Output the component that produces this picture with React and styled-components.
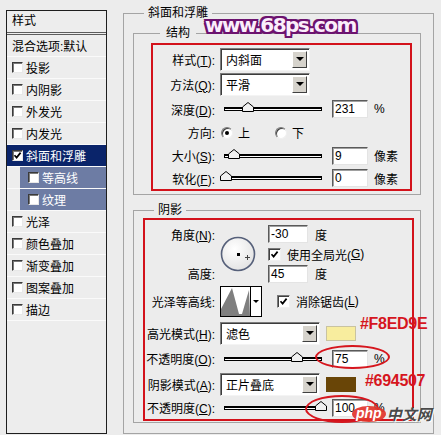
import React from "react";
import styled, { createGlobalStyle } from "styled-components";

const GlobalStyle = createGlobalStyle`
  html, body {
    margin: 0;
    padding: 0;
    background: #ececec;
  }
  body {
    font-family: "Liberation Sans", "Noto Sans CJK SC", sans-serif;
    font-size: 12px;
    color: #000;
  }
`;

const Screen = styled.div`
  position: relative;
  width: 441px;
  height: 435px;
  box-sizing: border-box;
  padding-left: 6px;
  display: flex;
  align-items: flex-start;
  overflow: hidden;
  background: #ececec;
`;

/* ---------- left list ---------- */

const StylePanel = styled.div`
  margin-top: 10px;
  width: 101px;
  height: 424px;
  box-sizing: border-box;
  border: 1px solid #1e1e1e;
  background: #ededed;
  display: flex;
  flex-direction: column;
`;

const PanelHead = styled.div`
  height: 24px;
  line-height: 21px;
  padding-left: 5px;
  box-sizing: border-box;
  border-bottom: 3px double #5c5c5c;
`;

const Item = styled.div`
  height: 22px;
  box-sizing: border-box;
  display: flex;
  align-items: center;
  gap: 3px;
  padding-left: ${(p) => (p.$sub ? 21 : 5)}px;
  border-bottom: 1px solid #fafafa;
  color: ${(p) => (p.$active || p.$sub ? "#fff" : "#000")};
  background: ${(p) =>
    p.$active
      ? "#0a246a"
      : p.$sub
      ? "linear-gradient(to right, #ededed 13px, #6d7ca4 13px)"
      : "#ededed"};
`;

const SmallBox = styled.span`
  width: 11px;
  height: 11px;
  box-sizing: border-box;
  flex: none;
  background: #fff;
  border: 1px solid;
  border-color: #3a3a3a #e8e8e8 #e8e8e8 #3a3a3a;
  box-shadow: inset 1px 1px 0 #7a7a7a;
  display: inline-flex;
  align-items: center;
  justify-content: center;
`;

const CheckMark = ({ size = 9 }) => (
  <svg width={size} height={size} viewBox="0 0 9 9">
    <path d="M1.5 4.3 L3.6 6.6 L7.6 1.6" stroke="#000" strokeWidth="1.7" fill="none" />
  </svg>
);

const effects = [
  { name: "投影" },
  { name: "内阴影" },
  { name: "外发光" },
  { name: "内发光" },
  { name: "斜面和浮雕", active: true, checked: true },
  { name: "等高线", sub: true },
  { name: "纹理", sub: true },
  { name: "光泽" },
  { name: "颜色叠加" },
  { name: "渐变叠加" },
  { name: "图案叠加" },
  { name: "描边" },
];

/* ---------- groups ---------- */

const Group = styled.fieldset`
  margin: ${(p) => p.$mt || 0}px 0 0 ${(p) => p.$ml || 0}px;
  padding: ${(p) => p.$pad};
  width: ${(p) => p.$w}px;
  box-sizing: border-box;
  min-width: 0;
  border: 1px solid #a4a4a4;
`;

const Legend = styled.legend`
  margin-left: ${(p) => p.$ml}px;
  padding: 0 ${(p) => p.$px}px;
  line-height: 14px;
  font-size: 12px;
`;

const RedBox = styled.div`
  height: ${(p) => p.$h}px;
  box-sizing: border-box;
  border: 2px solid #d3121b;
  padding-top: ${(p) => p.$pt}px;
`;

const Row = styled.div`
  display: grid;
  grid-template-columns: ${(p) => p.$label}px auto;
  column-gap: 5px;
  align-items: center;
  height: ${(p) => p.$h}px;
`;

const Label = styled.span`
  text-align: right;
  white-space: nowrap;
`;

const Controls = styled.div`
  display: flex;
  align-items: center;
`;

const Select = styled.div`
  width: ${(p) => p.$w}px;
  height: 23px;
  box-sizing: border-box;
  background: #fff;
  border: 1px solid;
  border-color: #7c7c7c #f4f4f4 #f4f4f4 #7c7c7c;
  box-shadow: inset 1px 1px 0 #3c3c3c;
  display: flex;
  align-items: center;
  justify-content: space-between;
  padding: 2px 2px 2px 5px;
`;

const SelectArrow = styled.span`
  width: 15px;
  height: 17px;
  box-sizing: border-box;
  background: #d6d3cc;
  border: 1px solid;
  border-color: #fff #404040 #404040 #fff;
  display: flex;
  align-items: center;
  justify-content: center;
  &::after {
    content: "";
    border-left: 4px solid transparent;
    border-right: 4px solid transparent;
    border-top: 4px solid #000;
  }
`;

const SliderTrack = styled.div`
  position: relative;
  width: 98px;
  height: 4px;
  box-sizing: border-box;
  margin: 0 10px 0 4px;
  border: 1px solid #000;
  border-top-width: 2px;
  background: #fff;
`;

const ThumbSvg = styled.svg`
  position: absolute;
  bottom: -2px;
  left: ${(p) => p.$pos * 100}%;
  transform: translateX(-50%);
`;

const Slider = ({ pos }) => (
  <SliderTrack>
    <ThumbSvg $pos={pos} width="12" height="10" viewBox="0 0 12 10">
      <polygon points="0.5,9.5 0.5,5 6,0.5 11.5,5 11.5,9.5" fill="#f0f0f0" stroke="#000" />
    </ThumbSvg>
  </SliderTrack>
);

const NumBox = styled.div`
  width: ${(p) => p.$w || 36}px;
  height: 18px;
  box-sizing: border-box;
  background: #fff;
  border: 1px solid;
  border-color: #5a5a5a #e4e4e4 #e4e4e4 #5a5a5a;
  box-shadow: inset 1px 1px 0 #a0a0a0;
  padding-left: 2px;
  line-height: 16px;
`;

const Unit = styled.span`
  margin-left: ${(p) => p.$gap || 6}px;
`;

const Radio = styled.span`
  width: 12px;
  height: 12px;
  box-sizing: border-box;
  border-radius: 50%;
  background: #fff;
  border: 1px solid;
  border-color: #7a7a7a #f0f0f0 #f0f0f0 #7a7a7a;
  box-shadow: inset 1px 1px 0 #404040;
  display: inline-flex;
  align-items: center;
  justify-content: center;
  margin-right: 5px;
  &::after {
    content: "";
    display: ${(p) => (p.$on ? "block" : "none")};
    width: 4px;
    height: 4px;
    border-radius: 50%;
    background: #000;
  }
`;

const RadioText = styled.span`
  margin-right: ${(p) => p.$mr || 0}px;
`;

const CheckBox = styled.span`
  width: 13px;
  height: 13px;
  box-sizing: border-box;
  flex: none;
  background: #fff;
  border: 1px solid;
  border-color: #7a7a7a #f0f0f0 #f0f0f0 #7a7a7a;
  box-shadow: inset 1px 1px 0 #404040;
  display: inline-flex;
  align-items: center;
  justify-content: center;
  margin: 0 ${(p) => p.$gap || 5}px 0 ${(p) => p.$ml || 0}px;
`;

const AngleGrid = styled.div`
  display: grid;
  grid-template-columns: 70px 43px auto;
  grid-template-rows: 20px 20px 19px;
  column-gap: 5px;
  align-items: center;
  margin-top: 4px;
`;

const DialCell = styled.div`
  grid-column: 2;
  grid-row: 1 / span 3;
  align-self: center;
  display: flex;
`;

const ContourPicker = styled.div`
  display: flex;
  width: 42px;
  height: 31px;
  box-sizing: border-box;
  border: 1px solid #000;
  background: #fff;
`;

const ContourArrow = styled.span`
  flex: 1;
  border-left: 1px solid #000;
  display: flex;
  align-items: center;
  justify-content: center;
  &::after {
    content: "";
    border-left: 3px solid transparent;
    border-right: 3px solid transparent;
    border-top: 3px solid #000;
  }
`;

const Swatch = styled.span`
  width: 30px;
  height: 15px;
  margin-left: 6px;
  background: ${(p) => p.$color};
  box-shadow: ${(p) => (p.$edge ? "inset 0 0 0 1px #c9c3a0" : "none")};
`;

/* ---------- annotations ---------- */

const Watermark = styled.div`
  position: absolute;
  left: 205px;
  top: 13px;
  font-family: "DejaVu Sans", "Liberation Sans", sans-serif;
  font-weight: bold;
  font-size: 20px;
  letter-spacing: -1.6px;
  line-height: 24px;
  color: #fbeefb;
  text-shadow: 2px 0 0 #6c126f, -2px 0 0 #6c126f, 0 2px 0 #6c126f, 0 -2px 0 #6c126f,
    2px 2px 0 #6c126f, -2px -2px 0 #6c126f, 2px -2px 0 #6c126f, -2px 2px 0 #6c126f;
`;

const HexNote = styled.div`
  position: absolute;
  left: ${(p) => p.$x}px;
  top: ${(p) => p.$y}px;
  font-family: "Liberation Sans", sans-serif;
  font-weight: bold;
  font-size: 16px;
  line-height: 16px;
  letter-spacing: -0.3px;
  color: #d6161e;
`;

const Ring = styled.div`
  position: absolute;
  left: ${(p) => p.$x}px;
  top: ${(p) => p.$y}px;
  width: ${(p) => p.$w}px;
  height: ${(p) => p.$h}px;
  box-sizing: border-box;
  border: 2px solid #d6161e;
  border-radius: 50%;
`;

const PhpMark = styled.div`
  position: absolute;
  left: 352px;
  top: 406px;
  display: flex;
  align-items: center;
`;

const PhpBubble = styled.span`
  height: 16px;
  padding: 0 4px;
  border-radius: 50%;
  background: rgba(226, 52, 42, 0.92);
  color: #fff;
  font-family: "Liberation Sans", sans-serif;
  font-style: italic;
  font-weight: bold;
  font-size: 14px;
  line-height: 14px;
`;

const PhpName = styled.span`
  margin-left: 1px;
  font-family: "Noto Sans CJK SC", sans-serif;
  font-weight: bold;
  font-size: 15px;
  line-height: 16px;
  color: #4a4a4a;
  text-shadow: 1px 1px 0 #fff;
  font-style: italic;
`;

const Dial = () => (
  <svg width="36" height="36" viewBox="0 0 36 36">
    <defs>
      <radialGradient id="dialFill" cx="0.4" cy="0.35" r="0.7">
        <stop offset="0" stopColor="#ffffff" />
        <stop offset="1" stopColor="#e2e2e2" />
      </radialGradient>
    </defs>
    <circle cx="18" cy="18" r="16.5" fill="url(#dialFill)" stroke="#56607a" strokeWidth="1.6" />
    <rect x="17" y="17" width="3" height="3" fill="#000" />
    <path d="M25 21.5 h5 M27.5 19 v5" stroke="#444" strokeWidth="1" />
  </svg>
);

const ContourGraph = () => (
  <svg width="29" height="29" viewBox="0 0 29 29">
    <path d="M0 29 L0 22 L11 1 L18 27 L21 27 L28 3 L29 29 Z" fill="#7f7f7f" />
  </svg>
);

const U = styled.u`
  text-decoration: underline;
`;

export default function App() {
  return (
    <>
      <GlobalStyle />
      <Screen>
        <StylePanel>
          <PanelHead>样式</PanelHead>
          <Item>混合选项:默认</Item>
          {effects.map((e) => (
            <Item key={e.name} $active={e.active} $sub={e.sub}>
              <SmallBox>{e.checked && <CheckMark size={9} />}</SmallBox>
              {e.name}
            </Item>
          ))}
        </StylePanel>

        <Group $w={311} $ml={16} $mt={6} $pad="6px 11px 10px 9px">
          <Legend $ml={11} $px={4}>斜面和浮雕</Legend>

          <Group $w={288} $pad="3px 8px 3px 17px">
            <Legend $ml={9} $px={6}>结构</Legend>
            <RedBox $h={148} $pt={2}>
              <Row $label={62} $h={24}>
                <Label>样式(<U>T</U>):</Label>
                <Controls>
                  <Select $w={90}>内斜面<SelectArrow /></Select>
                </Controls>
              </Row>
              <Row $label={62} $h={26}>
                <Label>方法(<U>Q</U>):</Label>
                <Controls>
                  <Select $w={90}>平滑<SelectArrow /></Select>
                </Controls>
              </Row>
              <Row $label={62} $h={24}>
                <Label>深度(<U>D</U>):</Label>
                <Controls>
                  <Slider pos={0.235} />
                  <NumBox>231</NumBox>
                  <Unit>%</Unit>
                </Controls>
              </Row>
              <Row $label={62} $h={23}>
                <Label>方向:</Label>
                <Controls>
                  <Radio $on style={{ marginLeft: 1 }} />
                  <RadioText $mr={25}>上</RadioText>
                  <Radio />
                  <RadioText>下</RadioText>
                </Controls>
              </Row>
              <Row $label={62} $h={23}>
                <Label>大小(<U>S</U>):</Label>
                <Controls>
                  <Slider pos={0.09} />
                  <NumBox>9</NumBox>
                  <Unit>像素</Unit>
                </Controls>
              </Row>
              <Row $label={62} $h={22}>
                <Label>软化(<U>F</U>):</Label>
                <Controls>
                  <Slider pos={0.01} />
                  <NumBox>0</NumBox>
                  <Unit>像素</Unit>
                </Controls>
              </Row>
            </RedBox>
          </Group>

          <Group $w={288} $mt={8} $pad="1px 6px 1px 9px">
            <Legend $ml={11} $px={4}>阴影</Legend>
            <RedBox $h={203} $pt={0}>
              <AngleGrid>
                <Label>角度(<U>N</U>):</Label>
                <DialCell>
                  <Dial />
                </DialCell>
                <Controls>
                  <NumBox $w={40}>-30</NumBox>
                  <Unit $gap={7}>度</Unit>
                </Controls>
                <Controls style={{ gridColumn: 3, gridRow: 2 }}>
                  <CheckBox $gap={6}><CheckMark size={9} /></CheckBox>
                  使用全局光(<U>G</U>)
                </Controls>
                <Label style={{ gridColumn: 1, gridRow: 3 }}>高度:</Label>
                <Controls style={{ gridColumn: 3, gridRow: 3 }}>
                  <NumBox $w={40}>45</NumBox>
                  <Unit $gap={7}>度</Unit>
                </Controls>
              </AngleGrid>
              <Row $label={70} $h={36}>
                <Label>光泽等高线:</Label>
                <Controls>
                  <ContourPicker>
                    <ContourGraph />
                    <ContourArrow />
                  </ContourPicker>
                  <CheckBox $ml={15} $gap={6}><CheckMark size={9} /></CheckBox>
                  消除锯齿(<U>L</U>)
                </Controls>
              </Row>
              <Row $label={70} $h={28}>
                <Label>高光模式(<U>H</U>):</Label>
                <Controls>
                  <Select $w={100}>滤色<SelectArrow /></Select>
                  <Swatch $color="#f8ed9e" $edge />
                </Controls>
              </Row>
              <Row $label={70} $h={23}>
                <Label>不透明度(<U>O</U>):</Label>
                <Controls>
                  <Slider pos={0.755} />
                  <NumBox>75</NumBox>
                  <Unit>%</Unit>
                </Controls>
              </Row>
              <Row $label={70} $h={28}>
                <Label>阴影模式(<U>A</U>):</Label>
                <Controls>
                  <Select $w={100}>正片叠底<SelectArrow /></Select>
                  <Swatch $color="#694507" />
                </Controls>
              </Row>
              <Row $label={70} $h={19}>
                <Label>不透明度(<U>C</U>):</Label>
                <Controls>
                  <Slider pos={1} />
                  <NumBox>100</NumBox>
                  <Unit>%</Unit>
                </Controls>
              </Row>
            </RedBox>
          </Group>
        </Group>

        <Watermark>www.68ps.com</Watermark>
        <HexNote $x={360} $y={316}>#F8ED9E</HexNote>
        <HexNote $x={365} $y={373}>#694507</HexNote>
        <Ring $x={315} $y={345} $w={75} $h={24} />
        <Ring $x={305} $y={395} $w={74} $h={28} />
        <PhpMark>
          <PhpBubble>php</PhpBubble>
          <PhpName>中文网</PhpName>
        </PhpMark>
      </Screen>
    </>
  );
}
